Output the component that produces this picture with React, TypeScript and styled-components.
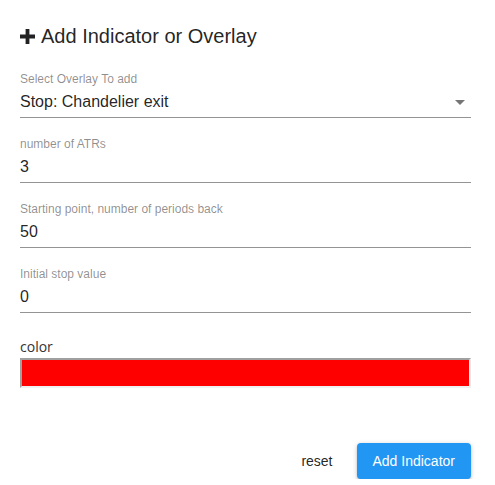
import React from "react";
import styled, { createGlobalStyle } from "styled-components";

const Global = createGlobalStyle`
  html, body { margin: 0; padding: 0; background: #fff; }
  body { font-family: "Liberation Sans", Arial, sans-serif; }
  * { box-sizing: border-box; }
`;

const Panel = styled.div`
  width: 495px;
  padding: 24px 24px 0 20px;
  display: flex;
  flex-direction: column;
`;

const Title = styled.h2`
  margin: 0 0 24px 0;
  font-size: 20px;
  line-height: 24px;
  font-weight: 400;
  color: rgba(0, 0, 0, 0.87);
  display: flex;
  align-items: center;
  gap: 6px;
`;

const PlusIcon = styled.svg`
  width: 15px;
  height: 15px;
  flex: none;
`;

const Field = styled.div`
  display: flex;
  flex-direction: column;
  margin-bottom: 19px;
`;

const Label = styled.label`
  font-size: 12px;
  line-height: 14px;
  color: rgba(0, 0, 0, 0.45);
`;

const ValueBox = styled.div`
  position: relative;
  font-size: 16px;
  line-height: 19px;
  padding: 6px 0 6px;
  color: rgba(0, 0, 0, 0.87);
  border-bottom: 1px solid rgba(0, 0, 0, 0.42);
`;

const Arrow = styled.span`
  position: absolute;
  right: 6px;
  top: 14px;
  width: 0;
  height: 0;
  border-left: 5px solid transparent;
  border-right: 5px solid transparent;
  border-top: 5px solid rgba(0, 0, 0, 0.54);
`;

const ColorLabel = styled.div`
  margin: 5px 0 2px;
  font-family: "Open Sans", "Noto Sans", sans-serif;
  font-size: 14px;
  line-height: 19px;
  color: #333;
`;

const Swatch = styled.div<{ $color: string }>`
  height: 30px;
  background: ${(p) => p.$color};
  border-top: 2px solid #a0a0a0;
  border-left: 2px solid #a0a0a0;
  border-right: 2px solid #f0f0f0;
  border-bottom: 2px solid #f0f0f0;
`;

const Actions = styled.div`
  margin-top: 55px;
  display: flex;
  justify-content: flex-end;
  align-items: center;
  gap: 16px;
`;

const TextButton = styled.button`
  background: none;
  border: none;
  font-family: "Liberation Sans", Arial, sans-serif;
  font-size: 14px;
  color: rgba(0, 0, 0, 0.87);
  padding: 8px 8px;
  cursor: pointer;
`;

const PrimaryButton = styled.button`
  height: 36px;
  padding: 0 16px;
  border: none;
  border-radius: 4px;
  background: #2196f3;
  color: #fff;
  font-family: "Liberation Sans", Arial, sans-serif;
  font-size: 14px;
  font-weight: 500;
  box-shadow: 0 1px 5px 0 rgba(0, 0, 0, 0.2), 0 2px 2px 0 rgba(0, 0, 0, 0.14),
    0 3px 1px -2px rgba(0, 0, 0, 0.12);
  cursor: pointer;
`;

const fields = [
  { label: "number of ATRs", value: "3" },
  { label: "Starting point, number of periods back", value: "50" },
  { label: "Initial stop value", value: "0" },
];

export default function App() {
  return (
    <>
      <Global />
      <Panel>
        <Title>
          <PlusIcon viewBox="0 0 15 15">
            <path d="M5.6 0h3.8v5.6H15v3.8H9.4V15H5.6V9.4H0V5.6h5.6z" fill="#222" />
          </PlusIcon>
          Add Indicator or Overlay
        </Title>
        <Field>
          <Label>Select Overlay To add</Label>
          <ValueBox>
            Stop: Chandelier exit
            <Arrow />
          </ValueBox>
        </Field>
        {fields.map((f) => (
          <Field key={f.label}>
            <Label>{f.label}</Label>
            <ValueBox>{f.value}</ValueBox>
          </Field>
        ))}
        <ColorLabel>color</ColorLabel>
        <Swatch $color="#ff0000" />
        <Actions>
          <TextButton>reset</TextButton>
          <PrimaryButton>Add Indicator</PrimaryButton>
        </Actions>
      </Panel>
    </>
  );
}
